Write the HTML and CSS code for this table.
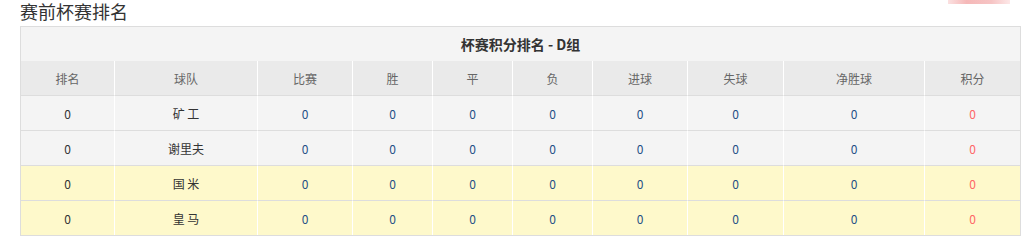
FILE: index.html
```html
<!DOCTYPE html>
<html lang="zh-CN">
<head>
<meta charset="utf-8">
<title>赛前杯赛排名</title>
<link rel="stylesheet" href="styles.css">
</head>
<body>
<div class="page">
  <div class="corner-glow"></div>
  <h2 class="section-title">赛前杯赛排名</h2>
  <table class="standings">
    <colgroup>
      <col class="c-rank"><col class="c-team"><col class="c-wide"><col class="c-narrow"><col class="c-narrow"><col class="c-narrow"><col class="c-wide"><col class="c-wide2"><col class="c-team2"><col class="c-wide">
    </colgroup>
    <thead>
      <tr class="caption-row"><th colspan="10">杯赛积分排名 - D组</th></tr>
      <tr class="head-row">
        <th>排名</th><th>球队</th><th>比赛</th><th>胜</th><th>平</th><th>负</th><th>进球</th><th>失球</th><th>净胜球</th><th>积分</th>
      </tr>
    </thead>
    <tbody>
      <tr>
        <td class="rank">0</td><td class="team">矿 工</td><td>0</td><td>0</td><td>0</td><td>0</td><td>0</td><td>0</td><td>0</td><td class="pts">0</td>
      </tr>
      <tr>
        <td class="rank">0</td><td class="team">谢里夫</td><td>0</td><td>0</td><td>0</td><td>0</td><td>0</td><td>0</td><td>0</td><td class="pts">0</td>
      </tr>
      <tr class="hl">
        <td class="rank">0</td><td class="team">国 米</td><td>0</td><td>0</td><td>0</td><td>0</td><td>0</td><td>0</td><td>0</td><td class="pts">0</td>
      </tr>
      <tr class="hl">
        <td class="rank">0</td><td class="team">皇 马</td><td>0</td><td>0</td><td>0</td><td>0</td><td>0</td><td>0</td><td>0</td><td class="pts">0</td>
      </tr>
    </tbody>
  </table>
</div>
</body>
</html>
```

FILE: styles.css
```css
html, body {
  margin: 0;
  padding: 0;
  background: #fff;
}

body {
  font-family: "Noto Sans CJK SC", "Noto Sans", sans-serif;
  color: #333;
}

.page {
  position: relative;
  padding-left: 20px;
}

/* faint pink strip peeking in at the top right */
.corner-glow {
  position: absolute;
  top: 0;
  left: 948px;
  width: 62px;
  height: 4px;
  background: linear-gradient(90deg, #fbe1e1 0%, #f5b8b8 30%, #f6c4c4 70%, #fde8e8 100%);
}

.section-title {
  margin: 0 0 4px;
  padding-top: 1px;
  font-size: 18px;
  font-weight: normal;
  line-height: 21px;
  color: #333;
}

.standings {
  width: 999px;
  table-layout: fixed;
  border-collapse: separate;
  border-spacing: 0;
  border: 1px solid #ddd;
  font-size: 12px;
  text-align: center;
}

.c-rank { width: 94px; }
.c-team { width: 143px; }
.c-wide { width: 95px; }
.c-narrow { width: 80px; }
.c-wide2 { width: 96px; }
.c-team2 { width: 141px; }

.standings th,
.standings td {
  padding: 0;
  height: 34px;
  border-right: 1px solid #fff;
  border-bottom: 1px solid #ddd;
}

.standings tr > :last-child {
  border-right: 0;
}

.standings tbody tr:last-child td {
  border-bottom: 0;
}

.caption-row th {
  background: #f4f4f4;
  font-size: 14px;
  font-weight: bold;
  color: #333;
  border-bottom: 0;
}

.head-row th {
  background: #eaeaea;
  font-weight: normal;
  color: #666;
}

.standings tbody td {
  background: #f4f4f4;
  color: #1f4f86;
}

.standings tbody tr.hl td {
  background: #fef9cb;
}

.standings tbody td.rank,
.standings tbody td.team {
  color: #333;
}

.standings tbody td.pts {
  color: #f66;
}
```
